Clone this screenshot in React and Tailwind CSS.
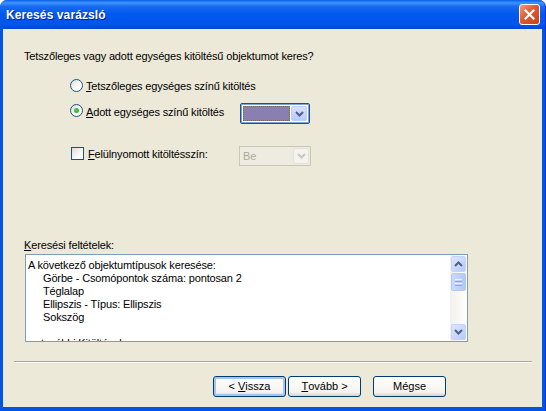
import React from 'react';

const font = { fontFamily: '"Liberation Sans", Arial, sans-serif' };

function Radio({ checked }) {
  return (
    <span className="relative w-[13px] h-[13px] rounded-full border border-[#1C5180] bg-[linear-gradient(135deg,#DCDCD7,#FFFFFF_70%)] shrink-0 flex items-center justify-center">
      {checked && <span className="w-[5px] h-[5px] rounded-full bg-[radial-gradient(circle_at_40%_40%,#55D051,#21A121)]" />}
    </span>
  );
}

function Chevron({ color = '#4D6185' }) {
  return (
    <svg width="9" height="6" viewBox="0 0 9 6">
      <path d="M1 1 L4.5 4.5 L8 1" fill="none" stroke={color} strokeWidth="2" />
    </svg>
  );
}

function ChevronUp() {
  return (
    <svg width="9" height="6" viewBox="0 0 9 6">
      <path d="M1 5 L4.5 1.5 L8 5" fill="none" stroke="#4D6185" strokeWidth="2" />
    </svg>
  );
}

function Button({ children, isDefault, className = '' }) {
  return (
    <button
      className={`w-[73px] h-[21px] rounded-[3px] border border-[#003C74] bg-[linear-gradient(to_bottom,#FFFFFF,#F4F3EE_80%,#D8D2C6)] text-[11px] text-black flex items-center justify-center ${
        isDefault ? 'shadow-[inset_0_0_0_2px_#A8C4EE]' : ''
      } ${className}`}
      style={font}
    >
      {children}
    </button>
  );
}

export default function App() {
  const lines = [
    { t: 'A következő objektumtípusok keresése:', i: 0 },
    { t: 'Görbe - Csomópontok száma: pontosan 2', i: 15 },
    { t: 'Téglalap', i: 15 },
    { t: 'Ellipszis - Típus: Ellipszis', i: 15 },
    { t: 'Sokszög', i: 15 },
    { t: '\u00a0', i: 0 },
    { t: 'további Kitöltések:', i: 13 },
  ];

  return (
    <div className="w-[546px] h-[411px] bg-white">
      <div className="w-[546px] h-[411px] flex flex-col rounded-t-[7px] overflow-hidden bg-[#0055E5] border-r border-[#0831D9]">
        {/* Title bar */}
        <div className="h-[29px] shrink-0 flex items-center justify-between pl-[6px] pr-[5px] bg-[linear-gradient(to_bottom,#0A5FE8_0%,#3D95FF_10%,#1A6AF0_22%,#0058EE_50%,#0055EA_85%,#0046D2_100%)]">
          <span
            className="text-white font-bold text-[12px] tracking-[0.1px] [text-shadow:1px_1px_0_#0A1E8C] pt-[1px]"
            style={font}
          >
            Keresés varázsló
          </span>
          <div className="w-[21px] h-[21px] rounded-[3px] border border-white bg-[linear-gradient(135deg,#F09A7A,#E0592F_45%,#C8401A)] flex items-center justify-center">
            <svg width="11" height="11" viewBox="0 0 11 11">
              <path d="M1.5 1.5 L9.5 9.5 M9.5 1.5 L1.5 9.5" stroke="#fff" strokeWidth="2.2" strokeLinecap="square" />
            </svg>
          </div>
        </div>

        {/* Client area */}
        <div className="flex-1 ml-[3px] mr-[3px] mb-[4px] bg-[#ECE9D8] flex flex-col text-[11px] text-black tracking-[-0.15px]" style={font}>
          <div className="pl-[21px] pt-[21px] leading-[13px]">
            Tetszőleges vagy adott egységes kitöltésű objektumot keres?
          </div>

          <div className="flex items-center pl-[67px] mt-[16px] h-[13px] leading-[13px]">
            <Radio />
            <span className="ml-[3px] pt-[2px]">
              <u>T</u>etszőleges egységes színű kitöltés
            </span>
          </div>

          <div className="flex items-start pl-[67px] mt-[11px] h-[21px]">
            <div className="w-[170px] flex items-center h-[13px] mt-[1px] leading-[13px]">
              <Radio checked />
              <span className="ml-[3px] pt-[3px]">
                <u>A</u>dott egységes színű kitöltés
              </span>
            </div>
            <div className="w-[70px] h-[21px] rounded-[2px] border border-[#1F4F8F] bg-white shadow-[inset_0_0_0_1px_#7EA3D9] p-[2px] flex">
              <div className="flex-1 bg-[#8A7FB0] border border-dotted border-[#6B7A3A]" />
              <div className="w-[16px] ml-[1px] rounded-[2px] bg-[linear-gradient(to_bottom,#D6E1FC,#B8CBF8)] border border-[#BCCDF6] flex items-center justify-center">
                <Chevron />
              </div>
            </div>
          </div>

          <div className="flex items-start pl-[68px] mt-[22px] h-[20px]">
            <div className="w-[168px] flex items-center h-[13px] mt-[1px] leading-[13px]">
              <span className="w-[13px] h-[13px] border border-[#1C5180] bg-[linear-gradient(135deg,#DCDCD7,#FFFFFF_70%)] shrink-0" />
              <span className="ml-[4px] pt-[1px]">
                <u>F</u>elülnyomott kitöltésszín:
              </span>
            </div>
            <div className="w-[72px] h-[20px] border border-[#C9C7BA] bg-[#EEECE0] flex p-[1px]">
              <span className="flex-1 pl-[2px] text-[#ACA899] leading-[16px] text-[11px]">Be</span>
              <div className="w-[16px] rounded-[2px] bg-[#F4F3EE] border border-[#E3E1D8] flex items-center justify-center">
                <Chevron color="#C9C7BA" />
              </div>
            </div>
          </div>

          <div className="pl-[21px] mt-[73px] leading-[13px]">
            <u>K</u>eresési feltételek:
          </div>

          <div className="ml-[22px] mt-[2px] w-[443px] h-[88px] border border-[#7F9DB9] bg-white flex">
            <div className="flex-1 overflow-hidden pt-[4px] pl-[2px] leading-[13px]">
              {lines.map((l, n) => (
                <div key={n} className="whitespace-nowrap" style={{ paddingLeft: l.i }}>
                  {l.t}
                </div>
              ))}
            </div>
            <div className="w-[17px] h-full bg-[linear-gradient(to_right,#F3F1EC,#FEFEFB)] flex flex-col items-center py-[1px]">
              <div className="w-[15px] h-[16px] rounded-[2px] border border-[#C4D3FB] bg-[linear-gradient(135deg,#DDE6FD,#B6CAF9)] flex items-center justify-center">
                <ChevronUp />
              </div>
              <div className="w-[15px] h-[18px] mt-[1px] rounded-[2px] border border-[#B6C9F5] bg-[linear-gradient(to_right,#C9D8FC,#B5C8F7)] flex flex-col items-center justify-center gap-[1px]">
                <span className="w-[7px] h-[1px] bg-[#EEF3FE]" />
                <span className="w-[7px] h-[1px] bg-[#8CA6E0]" />
                <span className="w-[7px] h-[1px] bg-[#EEF3FE]" />
                <span className="w-[7px] h-[1px] bg-[#8CA6E0]" />
              </div>
              <div className="flex-1" />
              <div className="w-[15px] h-[16px] rounded-[2px] border border-[#C4D3FB] bg-[linear-gradient(135deg,#DDE6FD,#B6CAF9)] flex items-center justify-center">
                <Chevron />
              </div>
            </div>
          </div>

          <div className="ml-[11px] mt-[19px] w-[518px] h-[2px] border-t border-[#ACA899] border-b border-b-white" />

          <div className="flex pl-[210px] mt-[13px] tracking-normal">
            <Button isDefault>
              &lt; <u className="ml-[3px]">V</u>issza
            </Button>
            <Button className="ml-[2px]">
              <u>T</u>ovább &gt;
            </Button>
            <Button className="ml-[12px]">Mégse</Button>
          </div>
        </div>
      </div>
    </div>
  );
}
